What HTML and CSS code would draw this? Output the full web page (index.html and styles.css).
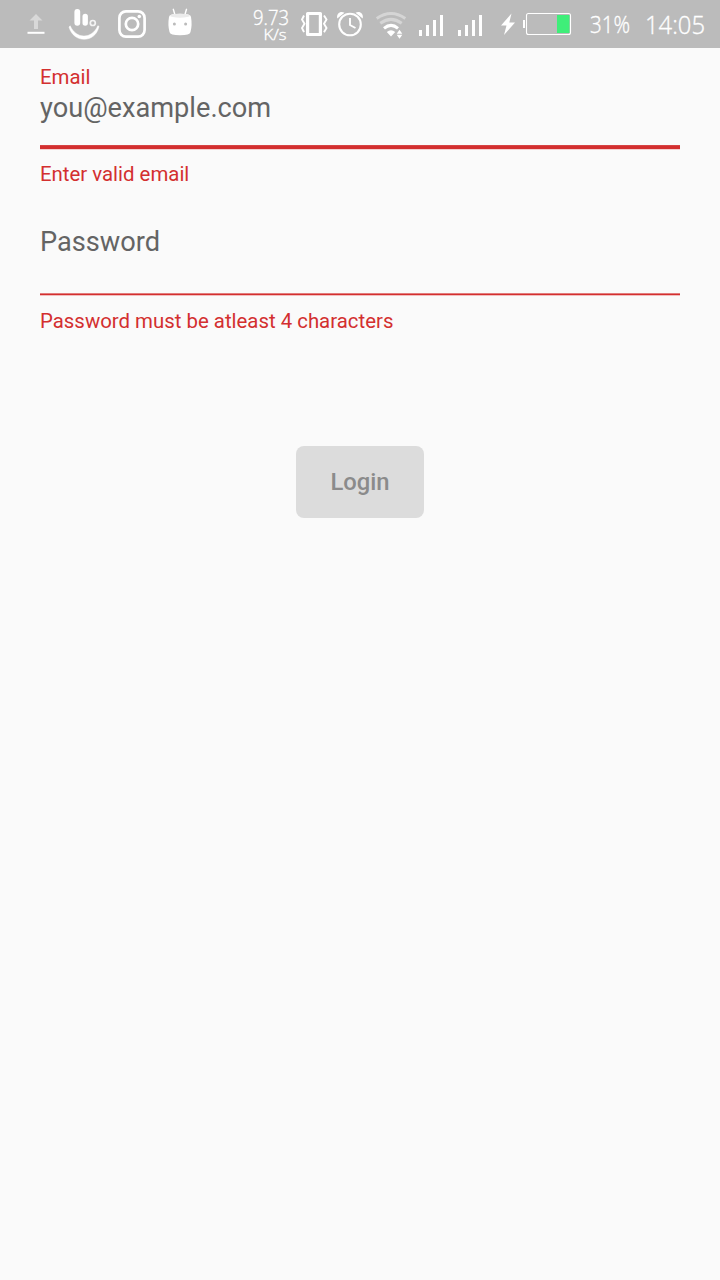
FILE: index.html
```html
<!DOCTYPE html>
<html lang="en">
<head>
<meta charset="utf-8">
<title>Login</title>
<link rel="stylesheet" href="styles.css">
</head>
<body>
<header class="status">
  <svg class="icon" width="40" height="48" viewBox="16 0 40 48">
    <path d="M36 14l-6.500 6.500h4.500V29h4v-8.500h4.500z" fill="#d8d8d8"/>
    <path d="M27.500 31.800h17v2h-17z" fill="#fff"/>
  </svg>
  <svg class="icon" width="50" height="48" viewBox="56 0 50 48">
    <g fill="none" stroke="#fff" stroke-linecap="round">
      <path d="M77.300 11.800v11" stroke-width="5.800"/>
      <path d="M85.200 16.500v6.500" stroke-width="5.400"/>
      <circle cx="92.800" cy="23" r="2.500" stroke-width="1.700" stroke="#f4f4f4"/>
    </g>
    <path d="M70.200 25.800C76 39.500 92 39.500 97.800 25.800L99 26.300C95.500 43.500 73.500 43.500 69 27z" fill="#fff" stroke="#fff" stroke-width=".5" stroke-linejoin="round"/>
  </svg>
  <svg class="icon" width="50" height="48" viewBox="106 0 50 48">
    <g fill="none" stroke="#fff" stroke-width="2.700">
      <rect x="119.400" y="11.400" width="25.200" height="25.200" rx="6.500"/>
      <circle cx="132" cy="24" r="6.200"/>
    </g>
    <circle cx="139.300" cy="16.500" r="1.800" fill="#fff"/>
  </svg>
  <svg class="icon" width="48" height="48" viewBox="156 0 48 48">
    <path d="M175 15l-1.700-5.700M184.800 15l1.700-5.700" stroke="#fff" stroke-width="1.400" stroke-linecap="round"/>
    <path d="M169 17Q169 13.700 180 13.700T191 17Q192.400 25 190.500 32Q190 35.200 180 35.200T169.500 32Q167.600 25 169 17z" fill="#fff"/>
    <ellipse cx="180" cy="15.700" rx="10" ry="2" fill="#ebebeb"/>
    <circle cx="174.400" cy="24" r="1.500" fill="#bbb"/><circle cx="185.600" cy="24" r="1.500" fill="#bbb"/>
  </svg>
  <svg class="icon speed" width="54" height="48" viewBox="242 0 54 48">
    <text class="digits" x="253" y="25" font-size="20" textLength="36" lengthAdjust="spacingAndGlyphs">9.73</text>
    <text class="digits" x="263.500" y="39.700" font-size="14" textLength="23" lengthAdjust="spacingAndGlyphs">K/s</text>
  </svg>
  <svg class="icon" width="36" height="48" viewBox="296 0 36 48">
    <path d="M307.600 13.500h12.800v21h-12.800z" fill="none" stroke="#fff" stroke-width="3.200" stroke-linejoin="round"/>
    <path d="M304 15.500l-2 4 2.500 4.300-2.500 4.200 2 4.200M324 15.500l2.500 4-2.500 4.300 2.500 4.200-2.500 4.200" fill="none" stroke="#fff" stroke-width="1.900"/>
  </svg>
  <svg class="icon" width="40" height="48" viewBox="332 0 40 48">
    <g fill="none" stroke="#fff">
      <circle cx="350" cy="24.500" r="10.800" stroke-width="2.100"/>
      <path d="M350 18v7l5.500 3" stroke-width="1.900"/>
    </g>
    <path d="M337.300 18.500C336 13 341 10.500 344.500 12.800zM362.700 18.500C364 13 359 10.500 355.500 12.800z" fill="#fff"/>
  </svg>
  <svg class="icon" width="40" height="48" viewBox="372 0 40 48">
    <g fill="none" stroke-width="3">
      <path d="M376.700 18.400Q391 8.500 405.300 18.400" stroke="#d5d5d5"/>
      <path d="M380.300 23.300Q391 15.500 401.700 23.300" stroke="#d5d5d5"/>
      <path d="M384 28.300Q391 22.500 398 28.300" stroke="#fff"/>
    </g>
    <path d="M386.800 32Q391 28.600 395.200 32L391 36.500zM399.500 29.800l2.800 4h-5.600zM399.500 38.800l2.800-4h-5.600z" fill="#fff"/>
  </svg>
  <svg class="icon" width="78" height="48" viewBox="412 0 78 48">
    <path d="M419 30h3v6h-3zM426 25h3v11h-3zM433 20h3v16h-3zM440 15h3v21h-3zM458 30h3v6h-3zM465 25h3v11h-3zM472 20h3v16h-3zM479 15h3v21h-3z" fill="#fff"/>
  </svg>
  <svg class="icon" width="92" height="48" viewBox="490 0 92 48">
    <path d="M511.500 13.500L501 25.500h5.500L504 35l11-12.500h-5.700z" fill="#fff"/>
    <path d="M523 20h2v8h-2z" fill="#fff"/>
    <rect x="526.500" y="13.500" width="44" height="21" rx="2" fill="none" stroke="#fff" stroke-width="1.100"/>
    <path d="M557 15h12.500v18H557z" fill="#3fee79"/>
  </svg>
  <svg class="icon" width="138" height="48" viewBox="582 0 138 48">
    <text class="digits" x="590" y="33" font-size="23.500" textLength="40" lengthAdjust="spacingAndGlyphs">31%</text>
    <text class="digits" x="645" y="34" font-size="26" textLength="60" lengthAdjust="spacingAndGlyphs">14:05</text>
  </svg>
</header>
<main class="form">
  <section class="field">
    <label class="label">Email</label>
    <div class="value">you@example.com</div>
    <div class="rule rule-focused"></div>
    <p class="error">Enter valid email</p>
  </section>
  <section class="field field-password">
    <div class="value">Password</div>
    <div class="rule rule-idle"></div>
    <p class="error">Password must be atleast 4 characters</p>
  </section>
  <button class="login" disabled>Login</button>
</main>
</body>
</html>
```
FILE: styles.css
```css
body {
  margin: 0;
  min-height: 1280px;
  background: #fafafa;
  font-family: Roboto, sans-serif;
}
.status {
  display: flex;
  box-sizing: border-box;
  height: 48px;
  padding-left: 16px;
  background: #bbb;
}
.icon {
  display: block;
  flex: none;
}
.speed {
  margin-left: 38px;
}
.digits {
  font-family: "Open Sans", "Noto Sans", sans-serif;
  font-weight: 300;
  fill: #fff;
  stroke: #fff;
  stroke-width: 0.35px;
}
.form {
  display: flex;
  flex-direction: column;
  padding: 17px 40px 0;
}
.label,
.error {
  display: block;
  margin: 0;
  color: #d32f2f;
  font-size: 20.4px;
  line-height: 24px;
}
.label {
  margin-bottom: 3px;
}
.value {
  color: #646464;
  font-size: 27.2px;
  line-height: 32px;
}
.rule-focused {
  height: 5px;
  margin: 21px 0 12px;
  background: linear-gradient(#d64444 1px, #d32f2f 1px, #d32f2f 4px, #f5d0d0 4px);
}
.rule-idle {
  height: 3px;
  margin: 35px 0 13px;
  background: linear-gradient(#e27c7c 1px, #d32f2f 1px, #d32f2f 2px, #f1bebe 2px);
}
.field-password {
  margin-top: 40px;
}
.login {
  align-self: center;
  width: 128px;
  height: 72px;
  margin-top: 113px;
  padding: 0;
  border: 0;
  border-radius: 8px;
  background: #dcdcdc;
  color: #8b8b8b;
  font: 500 23.8px/72px Roboto, sans-serif;
}
```
